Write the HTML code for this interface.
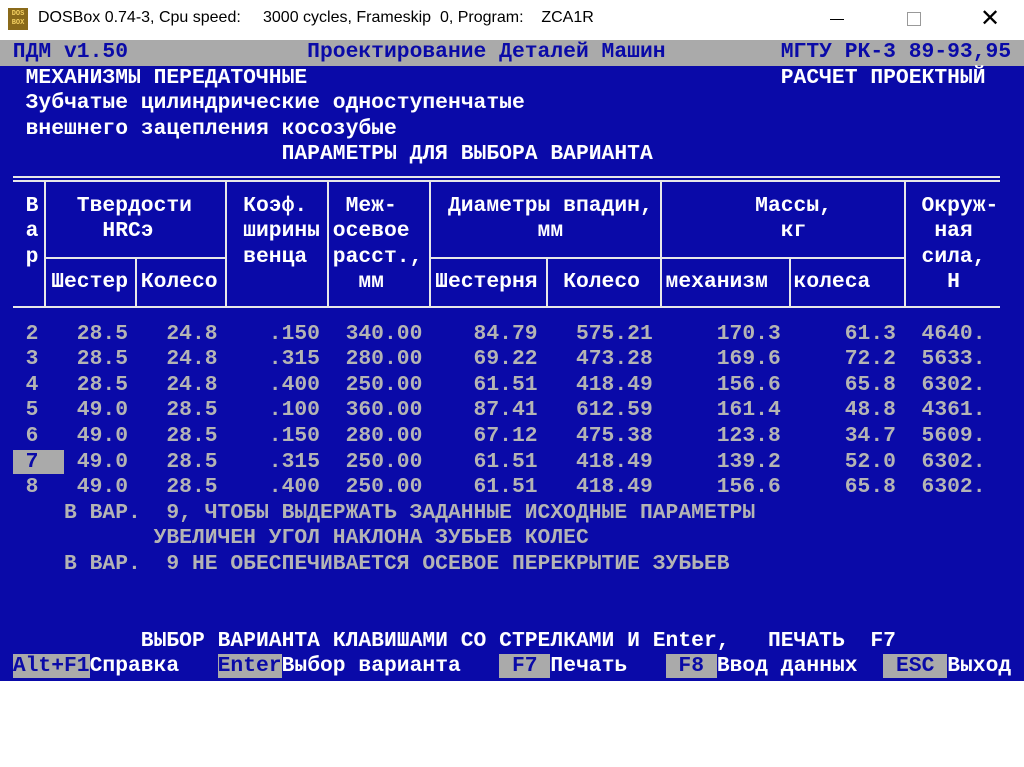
<!DOCTYPE html>
<html><head><meta charset="utf-8"><style>
*{margin:0;padding:0;box-sizing:border-box}
body{width:1024px;height:767px;background:#fff;position:relative;overflow:hidden;font-family:"Liberation Sans","Noto Sans CJK SC",sans-serif}
#tb{position:absolute;left:0;top:0;width:1024px;height:40px;background:#fff}
#tt{position:absolute;left:38px;top:9px;font-size:16px;color:#000;white-space:pre}
#ico{position:absolute;left:8px;top:8px;width:20px;height:22px;background:#8a6a1a;color:#f4d060;font:bold 7px "Liberation Mono",monospace;line-height:9px;text-align:center;padding-top:2px}
#scr{position:absolute;left:0;top:40px;width:1024px;height:641px;background:#0a0aa8}
.l{position:absolute;left:0;height:25.6px;font:bold 21.33px/25.6px "Liberation Mono","Noto Sans CJK SC",monospace;white-space:pre;color:#fff}
.g{color:#b4b4b4}
.hb{background:#aaa;color:#0a0aa8}
.h{position:absolute;background:#e8e8e8;height:2px}
.v{position:absolute;background:#e8e8e8;width:2px}
</style></head><body>
<div id="tb"><div id="ico">DOS<br>BOX</div><div id="tt">DOSBox 0.74-3, Cpu speed:     3000 cycles, Frameskip  0, Program:    ZCA1R</div>
<div style="position:absolute;left:830px;top:19px;width:14px;height:1px;background:#000"></div>
<div style="position:absolute;left:907px;top:12px;width:14px;height:14px;border:1px solid #999"></div>
<div style="position:absolute;left:980px;top:4px;font-size:24px;color:#000">✕</div>
</div>
<div id="scr"></div>
<div class="l hb" style="top:40px;width:1024px"> ПДМ v1.50              Проектирование Деталей Машин         МГТУ РК-3 89-93,95</div>
<div class="l" style="top:65.6px">  МЕХАНИЗМЫ ПЕРЕДАТОЧНЫЕ                                     РАСЧЕТ ПРОЕКТНЫЙ</div>
<div class="l" style="top:91.2px">  Зубчатые цилиндрические одноступенчатые</div>
<div class="l" style="top:116.8px">  внешнего зацепления косозубые</div>
<div class="l" style="top:142.4px">                      ПАРАМЕТРЫ ДЛЯ ВЫБОРА ВАРИАНТА</div>
<div class="l" style="top:193.6px">  В   Твердости    Коэф.   Меж-    Диаметры впадин,        Массы,       Окруж-</div>
<div class="l" style="top:219.2px">  а     HRCэ       ширины осевое          мм                 кг          ная</div>
<div class="l" style="top:244.8px">  р                венца  расст.,                                       сила,</div>
<div class="l" style="top:270.4px">    Шестер Колесо           мм    Шестерня  Колесо  механизм  колеса      Н</div>
<div class="h" style="left:13px;top:176px;width:987px"></div>
<div class="h" style="left:13px;top:180px;width:987px"></div>
<div class="h" style="left:13px;top:306px;width:987px"></div>
<div class="h" style="left:44px;top:257px;width:181px"></div>
<div class="h" style="left:430px;top:257px;width:474px"></div>
<div class="v" style="left:44px;top:180px;height:127px"></div>
<div class="v" style="left:135px;top:257px;height:50px"></div>
<div class="v" style="left:225px;top:180px;height:127px"></div>
<div class="v" style="left:327px;top:180px;height:127px"></div>
<div class="v" style="left:429px;top:180px;height:127px"></div>
<div class="v" style="left:546px;top:257px;height:50px"></div>
<div class="v" style="left:660px;top:180px;height:127px"></div>
<div class="v" style="left:789px;top:257px;height:50px"></div>
<div class="v" style="left:904px;top:180px;height:127px"></div>
<div class="l g" style="top:321.6px">  2   28.5   24.8    .150  340.00    84.79   575.21     170.3     61.3  4640.</div>
<div class="l g" style="top:347.2px">  3   28.5   24.8    .315  280.00    69.22   473.28     169.6     72.2  5633.</div>
<div class="l g" style="top:372.8px">  4   28.5   24.8    .400  250.00    61.51   418.49     156.6     65.8  6302.</div>
<div class="l g" style="top:398.4px">  5   49.0   28.5    .100  360.00    87.41   612.59     161.4     48.8  4361.</div>
<div class="l g" style="top:424px">  6   49.0   28.5    .150  280.00    67.12   475.38     123.8     34.7  5609.</div>
<div class="l g" style="top:449.6px"> <span class="hb"> 7  </span> 49.0   28.5    .315  250.00    61.51   418.49     139.2     52.0  6302.</div>
<div class="l g" style="top:475.2px">  8   49.0   28.5    .400  250.00    61.51   418.49     156.6     65.8  6302.</div>
<div class="l g" style="top:500.8px">     В ВАР.  9, ЧТОБЫ ВЫДЕРЖАТЬ ЗАДАННЫЕ ИСХОДНЫЕ ПАРАМЕТРЫ</div>
<div class="l g" style="top:526.4px">            УВЕЛИЧЕН УГОЛ НАКЛОНА ЗУБЬЕВ КОЛЕС</div>
<div class="l g" style="top:552px">     В ВАР.  9 НЕ ОБЕСПЕЧИВАЕТСЯ ОСЕВОЕ ПЕРЕКРЫТИЕ ЗУБЬЕВ</div>
<div class="l" style="top:628.8px">           ВЫБОР ВАРИАНТА КЛАВИШАМИ СО СТРЕЛКАМИ И Enter,   ПЕЧАТЬ  F7</div>
<div class="l" style="top:654.4px"> <span class="hb">Alt+F1</span>Справка   <span class="hb">Enter</span>Выбор варианта   <span class="hb"> F7 </span>Печать   <span class="hb"> F8 </span>Ввод данных  <span class="hb"> ESC </span>Выход</div>
</body></html>
